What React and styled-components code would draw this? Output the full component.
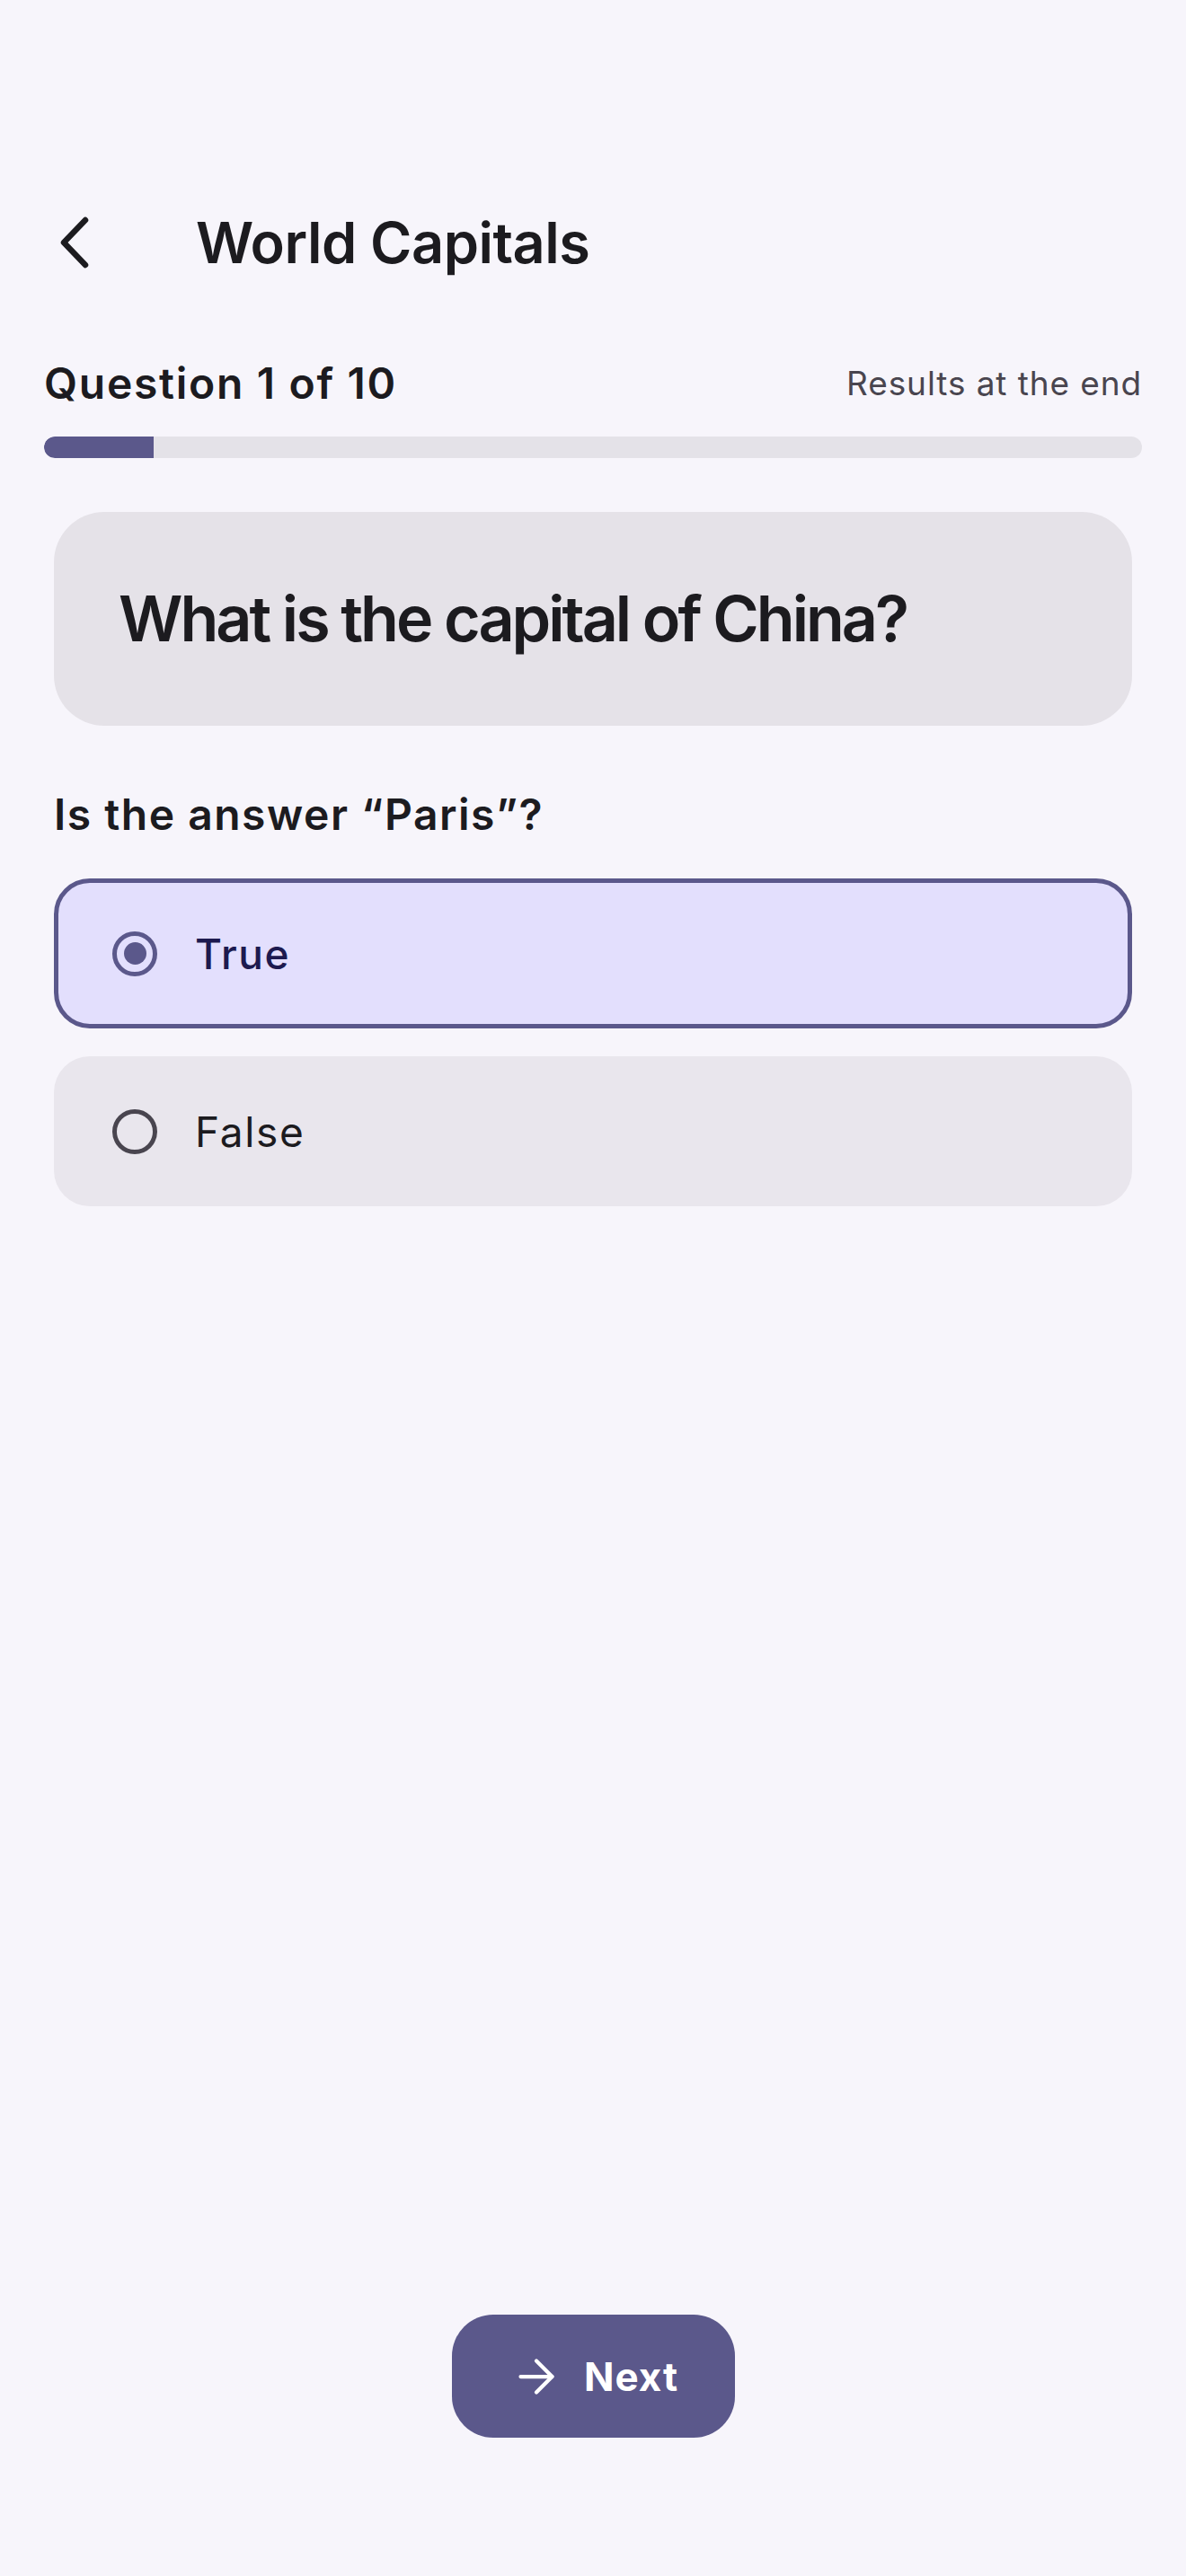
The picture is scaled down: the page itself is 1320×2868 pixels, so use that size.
import React, { useState } from "react";
import styled, { createGlobalStyle } from "styled-components";
import { ArrowRight } from "lucide-react";

const GlobalStyle = createGlobalStyle`
  html, body {
    margin: 0;
    padding: 0;
    background: #f7f5fb;
  }
  body {
    font-family: Inter, "Noto Sans", sans-serif;
    color: #1c1b1f;
    -webkit-font-smoothing: antialiased;
  }
  * {
    box-sizing: border-box;
  }
`;

const options = ["True", "False"];

function App() {
  const [picked, setPicked] = useState("True");

  return (
    <>
      <GlobalStyle />
      <Page>
        <Header>
          <BackButton aria-label="Back">
            <svg width="48" height="68" viewBox="0 0 48 68" fill="none">
              <path
                d="M35 9 L11 34 L35 59"
                stroke="#1c1b1f"
                strokeWidth="6.5"
                strokeLinecap="round"
                strokeLinejoin="round"
              />
            </svg>
          </BackButton>
          <Title>World Capitals</Title>
        </Header>

        <ProgressHead>
          <Counter>Question 1 of 10</Counter>
          <Hint>Results at the end</Hint>
        </ProgressHead>
        <Track>
          <Fill style={{ width: `${(1 / 10) * 100}%` }} />
        </Track>

        <Body>
          <QuestionCard>
            <QuestionText>What is the capital of China?</QuestionText>
          </QuestionCard>

          <Prompt>Is the answer “Paris”?</Prompt>

          <OptionList>
            {options.map((o) => (
              <Option key={o} selected={picked === o} onClick={() => setPicked(o)}>
                <Radio selected={picked === o} />
                <OptionLabel selected={picked === o}>{o}</OptionLabel>
              </Option>
            ))}
          </OptionList>
        </Body>

        <Footer>
          <NextButton>
            <ArrowRight size={60} strokeWidth={1.7} color="#ffffff" />
            <span>Next</span>
          </NextButton>
        </Footer>
      </Page>
    </>
  );
}

const Page = styled.div`
  min-height: 2868px;
  display: flex;
  flex-direction: column;
  padding: 186px 49px 154px;
`;

const Header = styled.div`
  height: 168px;
  display: flex;
  align-items: center;
  gap: 110px;
  padding-left: 11px;
`;

const BackButton = styled.button`
  width: 48px;
  height: 68px;
  padding: 0;
  border: 0;
  background: none;
  display: flex;
  align-items: center;
  justify-content: center;
  cursor: pointer;
`;

const Title = styled.h1`
  margin: 0;
  font-size: 63px;
  font-weight: 600;
  letter-spacing: -0.5px;
  line-height: 76px;
  color: #1c1b1f;
`;

const ProgressHead = styled.div`
  margin-top: 45px;
  display: flex;
  justify-content: space-between;
  align-items: center;
  height: 56px;
`;

const Counter = styled.div`
  font-size: 48px;
  font-weight: 600;
  line-height: 56px;
  letter-spacing: 1.7px;
  color: #1c1b1f;
`;

const Hint = styled.div`
  font-size: 37px;
  font-weight: 400;
  line-height: 56px;
  letter-spacing: 0.9px;
  color: #49454f;
`;

const Track = styled.div`
  margin-top: 31px;
  height: 24px;
  border-radius: 12px;
  background: #e4e2e8;
  overflow: hidden;
`;

const Fill = styled.div`
  height: 100%;
  background: #5b588b;
  border-radius: 12px 0 0 12px;
`;

const Body = styled.div`
  padding: 0 11px;
  display: flex;
  flex-direction: column;
`;

const QuestionCard = styled.div`
  margin-top: 60px;
  height: 238px;
  border-radius: 56px;
  background: #e5e2e8;
  padding: 0 72px;
  display: flex;
  align-items: center;
`;

const QuestionText = styled.h2`
  margin: 0;
  font-size: 70px;
  font-weight: 600;
  letter-spacing: -3px;
  line-height: 84px;
  color: #1c1b1f;
`;

const Prompt = styled.div`
  margin-top: 71px;
  font-size: 48px;
  font-weight: 600;
  line-height: 56px;
  letter-spacing: 1.5px;
  color: #1c1b1f;
`;

const OptionList = styled.div`
  margin-top: 43px;
  display: flex;
  flex-direction: column;
  gap: 31px;
`;

const Option = styled.div`
  height: 167px;
  border-radius: 40px;
  border: 5px solid ${(p) => (p.selected ? "#5b588b" : "transparent")};
  background: ${(p) => (p.selected ? "#e3dffd" : "#e9e6ed")};
  display: flex;
  align-items: center;
  gap: 42px;
  padding-left: 60px;
  cursor: pointer;
`;

const Radio = styled.span`
  position: relative;
  flex-shrink: 0;
  width: 50px;
  height: 50px;
  border-radius: 50%;
  border: 5px solid ${(p) => (p.selected ? "#5b588b" : "#49454f")};

  &::after {
    content: "";
    display: ${(p) => (p.selected ? "block" : "none")};
    position: absolute;
    left: 7.5px;
    top: 7.5px;
    width: 25px;
    height: 25px;
    border-radius: 50%;
    background: #5b588b;
  }
`;

const OptionLabel = styled.span`
  font-size: 46px;
  font-weight: ${(p) => (p.selected ? 500 : 400)};
  letter-spacing: ${(p) => (p.selected ? "1.5px" : "1.7px")};
  color: ${(p) => (p.selected ? "#1d1a4f" : "#1c1b1f")};
`;

const Footer = styled.div`
  margin-top: auto;
  display: flex;
  justify-content: center;
`;

const NextButton = styled.button`
  width: 315px;
  height: 137px;
  border: 0;
  border-radius: 46px;
  background: #5b588b;
  color: #ffffff;
  display: flex;
  align-items: center;
  justify-content: center;
  gap: 23px;
  padding: 0 0 0 2px;
  font-family: Inter, "Noto Sans", sans-serif;
  font-size: 44px;
  font-weight: 700;
  letter-spacing: 1px;
  cursor: pointer;
`;

export default App;
